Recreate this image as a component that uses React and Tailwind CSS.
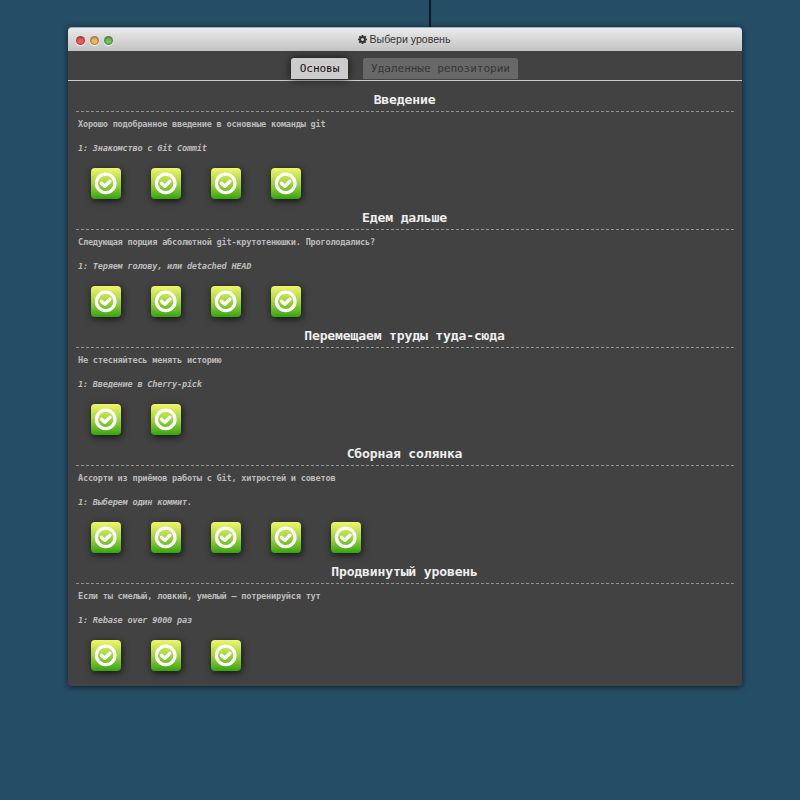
const sections = [
  { title: "Введение", about: "Хорошо подобранное введение в основные команды git", level: "1: Знакомство с Git Commit", count: 4 },
  { title: "Едем дальше", about: "Следующая порция абсолютной git-крутотенюшки. Проголодались?", level: "1: Теряем голову, или detached HEAD", count: 4 },
  { title: "Перемещаем труды туда-сюда", about: "Не стесняйтесь менять историю", level: "1: Введение в Cherry-pick", count: 2 },
  { title: "Сборная солянка", about: "Ассорти из приёмов работы с Git, хитростей и советов", level: "1: Выберем один коммит.", count: 5 },
  { title: "Продвинутый уровень", about: "Если ты смелый, ловкий, умелый – потренируйся тут", level: "1: Rebase over 9000 раз", count: 3 },
];

function Gear() {
  return (
    <svg className="size-[9px]" viewBox="0 128 1536 1536" fill="#333">
      <path d="M1024 896q0-106-75-181t-181-75-181 75-75 181 75 181 181 75 181-75 75-181zm512-109v222q0 12-8 23t-20 13l-185 28q-19 54-39 91 35 50 107 138 10 12 10 25t-9 23q-27 37-99 108t-94 71q-12 0-26-9l-138-108q-44 23-91 38-16 136-29 186-7 28-36 28h-222q-14 0-24.5-8.5t-11.5-21.5l-28-184q-49-16-90-37l-141 107q-10 9-25 9-14 0-25-11-126-114-165-168-7-10-7-23 0-12 8-23 15-21 51-66.5t54-70.5q-27-50-41-99l-183-27q-13-2-21-12.5t-8-23.5v-222q0-12 8-23t19-13l186-28q14-46 39-92-40-57-107-138-10-12-10-24 0-10 9-23 26-36 98.5-107.5t94.5-71.5q13 0 26 10l138 107q44-23 91-38 16-136 29-186 7-28 36-28h222q14 0 24.5 8.5t11.5 21.5l28 184q49 16 90 37l142-107q9-9 24-9 13 0 25 10 129 119 165 170 7 8 7 22 0 12-8 23-15 21-51 66.5t-54 70.5q26 50 41 98l183 28q13 2 21 12.5t8 23.5z" />
    </svg>
  );
}

function Level() {
  return (
    <div className="h-[31px] w-[30px] rounded-[4px] bg-linear-to-b from-[#f0f56c] via-[#9fd53d] to-[#2fa40e] shadow-[1px_2px_7px_#000000b0]">
      <svg className="h-[31px] w-[30px]" viewBox="0 0 30 31" fill="none" stroke="#fff">
        <circle cx="14.7" cy="15.4" r="9.3" strokeWidth="3.2" />
        <path d="M10.5 15.2 13.8 18.3 18.9 13.2" strokeWidth="3.4" strokeLinecap="round" strokeLinejoin="round" />
      </svg>
    </div>
  );
}

function Section({ title, about, level, count }) {
  return (
    <section className="h-[118px]">
      <h3 className="flex h-[24px] items-center justify-center border-b border-dashed border-[#929292] text-[13.1px] font-bold tracking-[-0.17px] text-[#eee]">{title}</h3>
      <p className="mt-[5px] h-[14px] pl-[2.5px] text-[8.6px] leading-[14px] font-bold tracking-[-0.225px] text-[#bbb]">{about}</p>
      <p className="mt-[10px] h-[14px] pl-[2.5px] text-[8.6px] leading-[14px] font-bold tracking-[-0.225px] text-[#bbb] italic">{level}</p>
      <div className="mt-[13px] flex gap-[30px] pl-[15px]">
        {Array.from({ length: count }, (_, i) => <Level key={i} />)}
      </div>
    </section>
  );
}

function Light({ color }) {
  return <span className={`size-[9px] rounded-full border border-[#00000050] shadow-[0_1px_1px_#fff,inset_0_1px_2px_#00000050] ${color}`} />;
}

export default function App() {
  return (
    <div className="flex h-[800px] w-[800px] flex-col overflow-hidden bg-[#264d66] font-['DejaVu_Sans_Mono',monospace]">
      <div className="ml-[429px] h-[27px] w-[2px] shrink-0 bg-[#10191f]" />
      <main className="ml-[67.5px] h-[659px] w-[674px] shrink-0 rounded-[4px] bg-[#424242] shadow-[0_1px_6px_#000000a0]">
        <header className="grid h-[24px] grid-cols-[1fr_auto_1fr] items-center rounded-t-[4px] border-t border-[#9fb0bb] bg-linear-to-b from-[#ebebeb] to-[#c3c3c3]">
          <div className="flex gap-[5px] pt-px pl-[8.5px]">
            <Light color="bg-[#f05a58]" />
            <Light color="bg-[#efb860]" />
            <Light color="bg-[#72c25e]" />
          </div>
          <div className="flex items-center gap-[2px] font-['Liberation_Sans',sans-serif] text-[10.6px] text-[#333]">
            <Gear />
            <span>Выбери уровень</span>
          </div>
        </header>
        <nav className="flex h-[30px] items-end justify-center gap-[15px] border-b border-[#ccc] pb-px text-[11.1px] tracking-[-0.07px]">
          <div className="flex h-[21px] w-[57px] items-center justify-center rounded-t-[3px] bg-[#ccc] pt-[2px] text-[#111] shadow-[0_0_8px_#000000c0]">Основы</div>
          <div className="flex h-[21px] w-[155px] items-center justify-center rounded-t-[3px] bg-[#686868] pt-[2px] text-[#363636]">Удаленные репозитории</div>
        </nav>
        <div className="px-[8px] pt-[7px]">
          {sections.map((s) => <Section key={s.title} {...s} />)}
        </div>
      </main>
    </div>
  );
}
